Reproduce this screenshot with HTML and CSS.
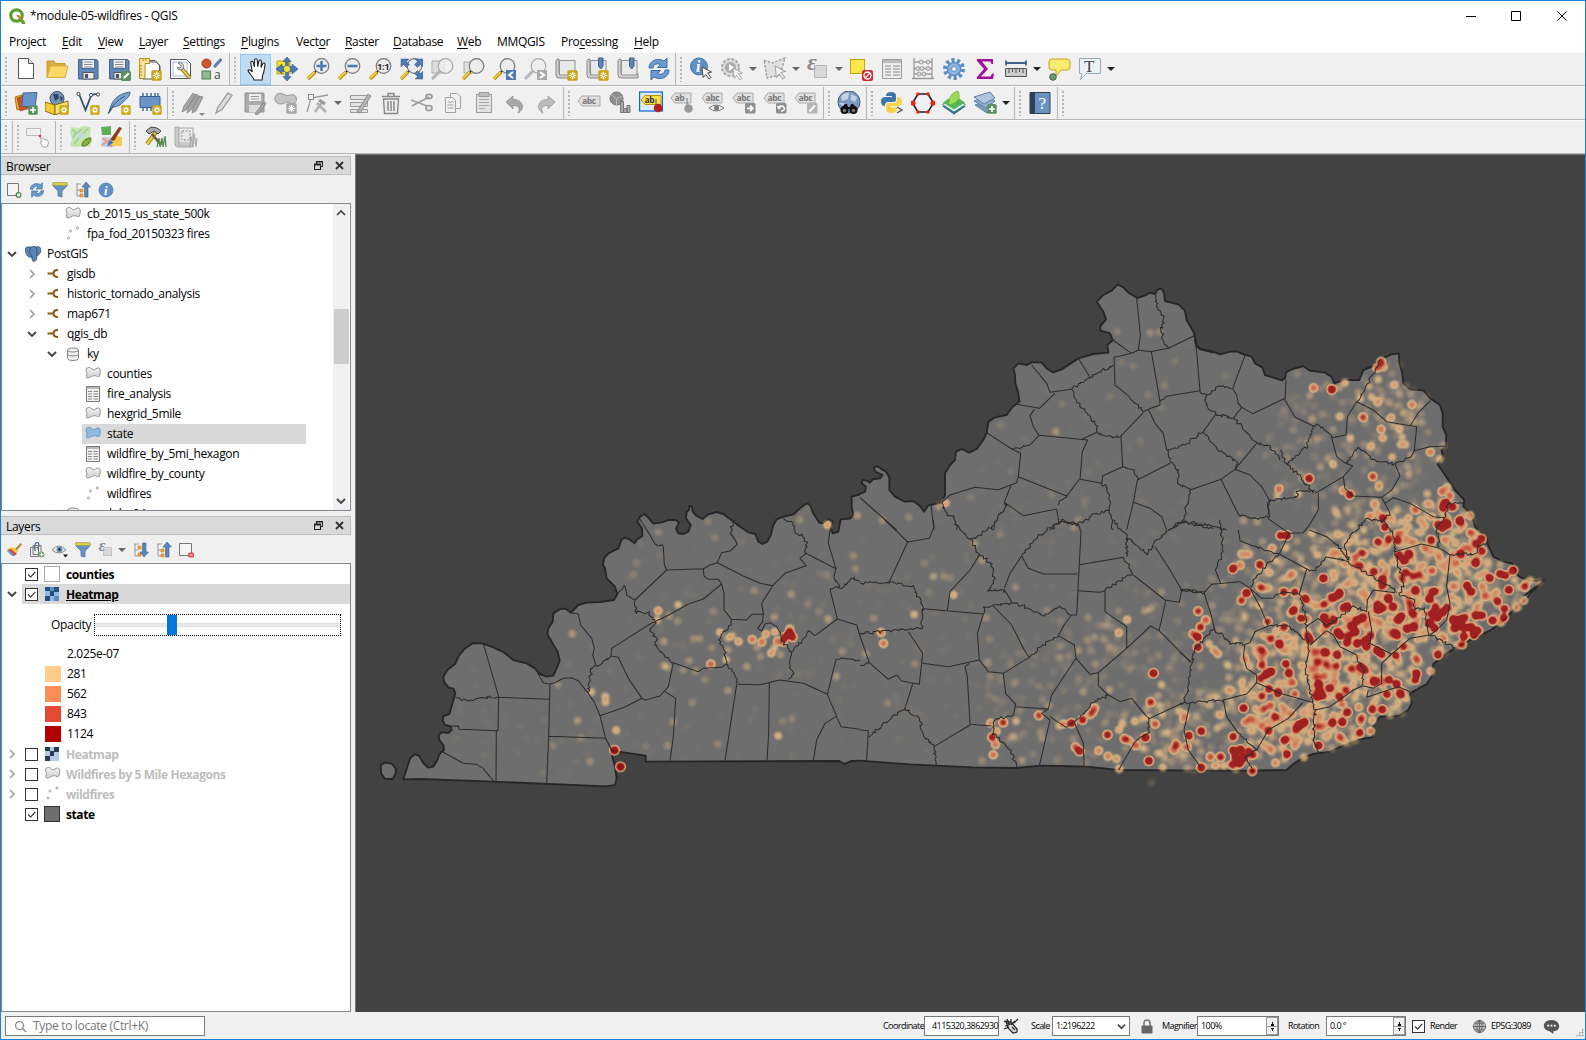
FILE: index.html
```html
<!DOCTYPE html>
<html lang="en">
<head>
<meta charset="utf-8">
<title>*module-05-wildfires - QGIS</title>
<link rel="stylesheet" href="styles.css">
</head>
<body>
<svg class="defs" aria-hidden="true">
<defs>
<linearGradient id="gGray" x1="0" y1="0" x2="0" y2="1"><stop offset="0" stop-color="#f2f2f2"/><stop offset="1" stop-color="#cfcfcf"/></linearGradient>
</defs>
<symbol id="star" viewBox="0 0 10 10"><rect x=".3" y=".3" width="9.4" height="9.4" rx="1.3" fill="#c9a40a"/><path d="M5 1.5v7M1.5 5h7M2.6 2.6l4.8 4.8M7.4 2.6L2.6 7.4" stroke="#fff" stroke-width="1.1"/><circle cx="5" cy="5" r="1" fill="#c9a40a"/></symbol>
<symbol id="starg" viewBox="0 0 10 10"><rect x=".3" y=".3" width="9.4" height="9.4" rx="1.3" fill="#a5a5a5"/><path d="M5 1.5v7M1.5 5h7M2.6 2.6l4.8 4.8M7.4 2.6L2.6 7.4" stroke="#fff" stroke-width="1.1"/></symbol>
<symbol id="plus" viewBox="0 0 10 10"><rect x=".3" y=".3" width="9.4" height="9.4" rx="1.3" fill="#5a8f60"/><path d="M5 2v6M2 5h6" stroke="#fff" stroke-width="1.6"/></symbol>
<symbol id="cursor" viewBox="0 0 12 14"><path d="M1 1l9.500 5-4 1 3.500 4.500-2 1.500-3.300-4.500-2.500 3z" fill="#fff" stroke="#444"/></symbol>
<symbol id="cursorg" viewBox="0 0 12 14"><path d="M1 1l9.500 5-4 1 3.500 4.500-2 1.500-3.300-4.500-2.500 3z" fill="#f4f4f4" stroke="#aaa"/></symbol>
<symbol id="lens" viewBox="0 0 24 24"><path d="M2 22l7-7" stroke="#b98a12" stroke-width="3.600"/><path d="M2 21.500l6.500-6.500" stroke="#f0cf3c" stroke-width="1.800"/><path d="M9 15l2-2" stroke="#222" stroke-width="2"/><circle cx="15.500" cy="9" r="7.300" fill="#ececec" stroke="#777" stroke-width="1.200"/></symbol>
<symbol id="lensg" viewBox="0 0 24 24"><path d="M2 22l8-8" stroke="#b5b5b5" stroke-width="3"/><circle cx="15.500" cy="9" r="7.300" fill="#efefef" fill-opacity=".8" stroke="#a8a8a8" stroke-width="1.200"/></symbol>
<symbol id="pagefold" viewBox="0 0 24 24"><path d="M4.500 1.500h10l5 5v15h-15z" fill="#fff" stroke="#555"/><path d="M14.500 1.500v5h5" fill="#ddd" stroke="#555"/></symbol>
<symbol id="folder" viewBox="0 0 24 24"><path d="M2 20V4h7l1.500 2.500H20V9" fill="#d9ac3d" stroke="#c79b2f"/><path d="M2 20.500L5.500 9H23l-3 11.500z" fill="#fbd867" stroke="#d9ac3d"/></symbol>
<symbol id="save" viewBox="0 0 24 24"><path d="M2.500 2.500h18l1.500 1.500v18H2.500z" fill="#5f88ba" stroke="#3f5f86"/><path d="M6 2.500h12.500v9H6z" fill="#f3f3f3" stroke="#48688f"/><path d="M8 5h8.500M8 7.500h8.500M8 10h8.500" stroke="#888"/><path d="M7 15.500h11v6.500H7z" fill="#eaeaea" stroke="#555"/><path d="M9 17h3v4H9z" fill="#456"/></symbol>
<symbol id="saveas" viewBox="0 0 24 24"><use href="#save" width="24" height="24"/><rect x="14" y="14" width="10" height="10" rx="1.500" fill="#5a8f60"/><path d="M16 22l1-2.500 4-4 1.500 1.500-4 4z" fill="#fff"/></symbol>
<symbol id="layout" viewBox="0 0 24 24"><path d="M5 5h13l4 4v13H5z" fill="#fff" stroke="#555"/><path d="M1.500 1.500h10v5H7v15H1.500z" fill="#f9e29b" stroke="#b98f16"/><path d="M5 2v2M8 2v2M2 9h2M2 12h2M2 15h2M2 18h2" stroke="#b98f16"/><path d="M11.500 3.500H17l4.500 4.500v6" fill="none" stroke="#555"/><use href="#star" x="13" y="13" width="11" height="11"/></symbol>
<symbol id="mgr" viewBox="0 0 24 24"><path d="M1.500 2.500h16l4 4v15h-20z" fill="#fff" stroke="#555"/><path d="M4 5h14v14H4z" fill="none" stroke="#9fbbe2"/><path d="M13 12l8 9" stroke="#8a6b10" stroke-width="4"/><path d="M13.500 12.500l7.500 8.500" stroke="#e6c95b" stroke-width="2.200"/><path d="M9 6a4 4 0 0 1 4.500 6.500A4 4 0 0 1 8 10l3 1 1.500-2z" fill="#ddd" stroke="#777"/></symbol>
<symbol id="style" viewBox="0 0 24 24"><circle cx="6.500" cy="6.500" r="4.500" fill="#d3532b" stroke="#a33c1b"/><path d="M15 9l5.500-6" stroke="#5a82b5" stroke-width="3.200" stroke-linecap="round"/><rect x="2" y="14" width="8.500" height="8" fill="#8fb98e" stroke="#4f7f50"/><text x="14" y="22" class="ic" font-size="12" fill="#444">a</text></symbol>
<symbol id="hand" viewBox="0 0 24 24"><path d="M10 23c-.5-3.500-5-6-6-9.500 1.300-1.500 3-.2 4.300 1.500L6.800 6c-.2-2 2.100-2.300 2.600-.4l1 4.400.2-6.800c.1-2 2.500-2 2.700 0l.4 6.500 1.200-5.500c.5-1.800 2.600-1.400 2.500.4l-.4 6 1.700-3.800c.7-1.500 2.600-.8 2.300 1-.8 3.700-.5 7.200-2.500 10.700l-.3 4.500z" fill="#fff" stroke="#222" stroke-width="1.100"/></symbol>
<symbol id="pansel" viewBox="0 0 24 24"><path d="M2 4h13v13H2z" fill="#f7e52c" stroke="#c2a30e"/><path d="M12 0l4 4.500h-2.600v5.100H17V7l6 5-6 5v-2.600h-3.600v5.100H16L12 24l-4-4.500h2.600v-5.100H7V17l-6-5 6-5v2.600h3.600V4.500H8z" fill="#4d79b0" stroke="#2f5687" stroke-width=".6"/><circle cx="12" cy="12" r="3" fill="#f7e52c"/></symbol>
<symbol id="zin" viewBox="0 0 24 24"><use href="#lens" width="24" height="24"/><path d="M15.500 4v10M10.500 9h10" stroke="#4d79b0" stroke-width="2.600"/></symbol>
<symbol id="zout" viewBox="0 0 24 24"><use href="#lens" width="24" height="24"/><path d="M10.500 9h10" stroke="#4d79b0" stroke-width="2.600"/></symbol>
<symbol id="z11" viewBox="0 0 24 24"><use href="#lens" width="24" height="24"/><text x="9" y="12.500" class="ic" font-size="9.500" font-weight="700" fill="#333">1:1</text></symbol>
<symbol id="zfull" viewBox="0 0 24 24"><use href="#lens" width="24" height="24"/><path d="M2 2h8L7.500 4.500l3 3-3 3-3-3L2 10zM24 2v8l-2.500-2.500-3 3-3-3 3-3L16 2zM24 22h-8l2.500-2.500-3-3 3-3 3 3L24 14z" fill="#4d79b0" stroke="#365f92" stroke-width=".5"/></symbol>
<symbol id="zsel" viewBox="0 0 24 24"><path d="M2 4h12v12H2z" fill="#ddd" stroke="#aaa"/><use href="#lensg" width="24" height="24"/></symbol>
<symbol id="zlay" viewBox="0 0 24 24"><path d="M3 5h12v11H3z" fill="#e2e2e2" stroke="#aaa"/><use href="#lens" width="24" height="24"/></symbol>
<symbol id="zlast" viewBox="0 0 24 24"><use href="#lens" width="24" height="24"/><path d="M14 13h10v10H14z" fill="#4d79b0"/><path d="M21 15l-4 3 4 3" stroke="#fff" stroke-width="2" fill="none"/></symbol>
<symbol id="znext" viewBox="0 0 24 24"><use href="#lensg" width="24" height="24"/><path d="M14 13h10v10H14z" fill="#aaa"/><path d="M17 15l4 3-4 3" stroke="#fff" stroke-width="2" fill="none"/></symbol>
<symbol id="scroll" viewBox="0 0 24 24"><path d="M2 4q0-2 3-2v14.500h17v4.500H5A3 3 0 0 1 2 18z" fill="#d2d2d2" stroke="#888"/><path d="M5.500 3.500h15.500v14.500H5.500z" fill="#e9e9e9" stroke="#909090"/></symbol>
<symbol id="mapnew" viewBox="0 0 24 24"><use href="#scroll" width="24" height="24"/><use href="#star" x="13" y="13" width="11" height="11"/></symbol>
<symbol id="bmnew" viewBox="0 0 24 24"><use href="#mapnew" width="24" height="24"/><path d="M13.500 1h4.500v8l-2.250 3L13.500 9z" fill="#5b86ba" stroke="#365f92"/></symbol>
<symbol id="bm" viewBox="0 0 24 24"><use href="#scroll" width="24" height="24"/><path d="M13.500 1h4.500v8l-2.250 3L13.500 9z" fill="#5b86ba" stroke="#365f92"/></symbol>
<symbol id="refresh" viewBox="0 0 24 24"><path d="M2 11C2 4 10 0 17 4l3-3v9.500h-9.500l3-3C10 6 7 7 6 11z" fill="#6a9ad0" stroke="#3f6ea6"/><path d="M22 13c0 7-8 11-15 7l-3 3v-9.500h9.500l-3 3C14 18 17 17 18 13z" fill="#6a9ad0" stroke="#3f6ea6"/></symbol>
<symbol id="info" viewBox="0 0 24 24"><circle cx="12" cy="12" r="10.500" fill="#6090c4" stroke="#4676ac"/><text x="9" y="19" class="is" font-size="19" fill="#fff">i</text></symbol>
<symbol id="ident" viewBox="0 0 24 24"><circle cx="10" cy="9.500" r="8.500" fill="#6090c4" stroke="#4676ac"/><text x="7" y="15" class="is" font-size="16" fill="#fff">i</text><use href="#cursor" x="12" y="9" width="12" height="14"/></symbol>
<symbol id="rung" viewBox="0 0 24 24"><circle cx="10.500" cy="10.500" r="8.500" fill="#ddd" stroke="#a9a9a9" stroke-width="2" stroke-dasharray="3 1.500"/><circle cx="10.500" cy="10.500" r="5.500" fill="#aaa"/><path d="M9 7l5 3.500-5 3.500z" fill="#fff"/><use href="#cursorg" x="12" y="10" width="12" height="14"/></symbol>
<symbol id="selg" viewBox="0 0 24 24"><path d="M1 3l8 3L22 1l-5 17-13 3z" fill="#e0e0e0" stroke="#999" stroke-dasharray="2.500 1.500" stroke-width="1.300"/><use href="#cursorg" x="11" y="8" width="13" height="15"/></symbol>
<symbol id="epsg" viewBox="0 0 24 24"><rect x="8.500" y="8.500" width="12" height="12" fill="#d9d9d9" stroke="#b5b5b5"/><text x="1" y="13" class="is" font-size="24" fill="#8d8d8d">ε</text></symbol>
<symbol id="desel" viewBox="0 0 24 24"><rect x="1.500" y="2.500" width="14" height="14" fill="#fde64b" stroke="#c2a30e"/><rect x="13" y="13" width="11" height="11" rx="2" fill="#d2282e"/><circle cx="18.500" cy="18.500" r="3.500" fill="none" stroke="#fff" stroke-width="1.300"/><path d="M16 21l5-5" stroke="#fff" stroke-width="1.300"/></symbol>
<symbol id="table" viewBox="0 0 24 24"><path d="M2.500 2.500h19v19h-19z" fill="#eee" stroke="#999"/><path d="M3 3h18v3H3z" fill="#bbb"/><path d="M5 9h6M13 9h7M5 12h6M13 12h7M5 15h6M13 15h7M5 18h6M13 18h7" stroke="#aaa" stroke-width="1.400"/></symbol>
<symbol id="abacus" viewBox="0 0 24 24"><path d="M3 1v20M21 1v20M1 21.500h22M3 5h18M3 11.500h18M3 17h18" stroke="#999" stroke-width="1.300"/><g fill="#ddd" stroke="#999"><circle cx="10" cy="5" r="2"/><circle cx="17" cy="5" r="2"/><circle cx="7" cy="11.500" r="2"/><circle cx="11" cy="11.500" r="2"/><circle cx="17" cy="11.500" r="2"/><circle cx="8" cy="17" r="2"/><circle cx="13" cy="17" r="2"/></g></symbol>
<symbol id="gear" viewBox="0 0 24 24"><circle cx="12" cy="12" r="9" fill="none" stroke="#5b8cc8" stroke-width="4" stroke-dasharray="3.200 2.450"/><circle cx="12" cy="12" r="6.500" fill="#8db3e2" stroke="#5b8cc8" stroke-width="1.500"/><circle cx="12" cy="12" r="2.500" fill="#f0f0f0" stroke="#5b8cc8"/></symbol>
<symbol id="sigma" viewBox="0 0 24 24"><path d="M4 2h16v5h-1.500l-1-2.500H9L15 12l-7 7.500h9.500l1.500-3H21L20 22H4v-2l7-8L4 4z" fill="#a30e9c"/></symbol>
<symbol id="measure" viewBox="0 0 24 24"><path d="M2 6h20M2 3.500v5M22 3.500v5" stroke="#3f5f86" stroke-width="1.800"/><path d="M1.500 11.500h21v8h-21z" fill="#ccc" stroke="#555"/><path d="M5 12v4M8.500 12v3M12 12v4M15.500 12v3M19 12v4" stroke="#555"/></symbol>
<symbol id="tip" viewBox="0 0 24 24"><path d="M5 2h15q3 0 3 3v5q0 3-3 3h-6l-5 6 0-6H5q-3 0-3-3V5q0-3 3-3z" fill="#f7ea72" stroke="#c9a413"/><circle cx="6" cy="20" r="3.300" fill="#6b9a70" stroke="#41684a"/></symbol>
<symbol id="txt" viewBox="0 0 24 24"><path d="M1.500 1.500h21v15h-14l-6 6 1.500-6h-2.500z" fill="#eaf2f6" stroke="#9ab"/><text x="6" y="15" class="is2" font-size="17" fill="#444">T</text></symbol>
<symbol id="dsm" viewBox="0 0 24 24"><path d="M1 6l10-3 3 12-11 4z" fill="#f0b92c" stroke="#a87411"/><path d="M3 7l11-4 3 14-11 3z" fill="#c5512f" stroke="#93371c" stroke-width=".6"/><path d="M9 2l14-.5-2 14-13 0z" fill="#6a94c8" stroke="#3f6694"/><use href="#plus" x="14" y="14" width="10" height="10"/></symbol>
<symbol id="gpkg" viewBox="0 0 24 24"><circle cx="12" cy="7.500" r="7" fill="#7394b8" stroke="#35506e"/><path d="M8 3l5 0 1 4-4 3zM15 5l3 2-2 4z" fill="#2d4663"/><path d="M0 11l10 3v10L0 20z" fill="#f3ce2e" stroke="#8b6c0a"/><path d="M10 14l13-4v9l-13 5z" fill="#fbe572" stroke="#8b6c0a"/><use href="#star" x="14" y="14" width="10" height="10"/></symbol>
<symbol id="vnew" viewBox="0 0 24 24"><path d="M3 3l6.500 16L15 5q3-3 7-1" fill="none" stroke="#33506f" stroke-width="1.800"/><g fill="#fff" stroke="#445"><circle cx="2.500" cy="3" r="1.600"/><circle cx="15" cy="4" r="1.600"/><circle cx="22" cy="3.500" r="1.600"/></g><use href="#star" x="14" y="14" width="10" height="10"/></symbol>
<symbol id="feather" viewBox="0 0 24 24"><path d="M2 22C4 10 10 3 23 1c0 5-4 7-6 9-3 4-8 6-11 6z" fill="#7fa5d3" stroke="#3a6190"/><path d="M1 23C5 15 10 9 18 5" stroke="#2d4f77" fill="none"/><use href="#star" x="14" y="14" width="10" height="10"/></symbol>
<symbol id="chip" viewBox="0 0 24 24"><path d="M5 2v18M9 2v18M13 2v18M17 2v18M20 2v18" stroke="#355f92" stroke-width="1.400"/><path d="M2 5.500h20v11H2z" fill="#6a94c8" stroke="#355f92"/><use href="#star" x="14" y="14" width="10" height="10"/></symbol>
<symbol id="pens" viewBox="0 0 24 24"><path d="M1 21l2-6L12 2l3 2L5 19zM6 22l1-5L15 3l3 2L10 19zM11 22l1-5L18 5l4 1L15 20z" fill="#a5a5a5" stroke="#858585" stroke-width=".8"/></symbol>
<symbol id="pen" viewBox="0 0 24 24"><path d="M4 22l2-6L16 2l4 2.500-10 14z" fill="#ddd" stroke="#9e9e9e" stroke-width="1.300"/></symbol>
<symbol id="saveg" viewBox="0 0 24 24"><path d="M2 2h19v19H2z" fill="#ababab" stroke="#929292"/><path d="M6 3h12v7H6z" fill="#eee"/><path d="M8 5.500h8M8 8h8" stroke="#999"/><path d="M6 14h11v7H6z" fill="#ddd"/><path d="M12 23l9-12 2 1.500-8 11z" fill="#aaa" stroke="#888"/></symbol>
<symbol id="polyg" viewBox="0 0 24 24"><path d="M1 6c2-5 7-4 10-2s9-3 11 2-2 8-6 6-5 1-9 1-7-3-6-7z" fill="#c4c4c4" stroke="#999"/><use href="#starg" x="12" y="12" width="11" height="11"/></symbol>
<symbol id="vertg" viewBox="0 0 24 24"><path d="M2 21L6 7l17-3" fill="none" stroke="#999" stroke-width="1.300"/><rect x="3.500" y="3.500" width="5" height="5" fill="#eee" stroke="#888"/><path d="M12 12l9 9M18 10L10 21" stroke="#b3b3b3" stroke-width="2.600"/><path d="M14 9l6 4" stroke="#999" stroke-width="3"/></symbol>
<symbol id="editg" viewBox="0 0 24 24"><path d="M2.500 4.500h17v4h-17zM2.500 11.500h17v4h-17zM2.500 18.500h17v3h-17z" fill="#e4e4e4" stroke="#999"/><path d="M9 21L20 3l3 2-11 17z" fill="#b5b5b5" stroke="#8d8d8d"/></symbol>
<symbol id="trash" viewBox="0 0 24 24"><path d="M4.500 8h15l-1 14.500h-13z" fill="#eee" stroke="#888" stroke-width="1.400"/><path d="M3 5.500h18M9 5V2.500h6V5M9 10v10M12 10v10M15 10v10" stroke="#888" stroke-width="1.500" fill="none"/></symbol>
<symbol id="cut" viewBox="0 0 24 24"><path d="M1 9l16 6M2 15l17-9" stroke="#a0a0a0" stroke-width="1.800"/><g fill="none" stroke="#999" stroke-width="1.700"><ellipse cx="19" cy="5.500" rx="3" ry="2.200"/><ellipse cx="19" cy="17" rx="3" ry="2.500"/></g></symbol>
<symbol id="copy" viewBox="0 0 24 24"><g fill="#f1f1f1" stroke="#a0a0a0"><path d="M9.500 2.500h7l3 3v12h-10z"/><path d="M4.500 6.500h7l3 3v12h-10z"/></g><path d="M6.500 11h6M6.500 14h6M6.500 17h6" stroke="#a0a0a0"/></symbol>
<symbol id="paste" viewBox="0 0 24 24"><path d="M4.500 3.500h15v18h-15z" fill="#e2e2e2" stroke="#999"/><path d="M7 1.500h10v4H7z" fill="#bdbdbd" stroke="#999"/><path d="M7 8.500h10M7 11.500h10M7 14.500h10M7 17.500h6" stroke="#a8a8a8"/></symbol>
<symbol id="undo" viewBox="0 0 24 24"><path d="M3 11l7-6v3.500c11 0 12 10 5 13.500 3-5 0-7.500-5-7.500V18z" fill="#a8a8a8" stroke="#999"/></symbol>
<symbol id="redo" viewBox="0 0 24 24"><path d="M21 11l-7-6v3.500C3 8.500 2 18.500 9 22c-3-5 0-7.500 5-7.500V18z" fill="#bcbcbc" stroke="#a5a5a5"/></symbol>
<symbol id="abc" viewBox="0 0 24 24"><path d="M1 10l4-5h18v10H5z" fill="#e1e1e1" stroke="#aaa"/><text x="5" y="13" class="ic" font-size="8.500" font-weight="700" fill="#777">abc</text></symbol>
<symbol id="abc2" viewBox="0 0 24 24"><path d="M1 7l4-5h16v10H5z" fill="#e1e1e1" stroke="#aaa"/><text x="4.500" y="10" class="ic" font-size="8.500" font-weight="700" fill="#777">abc</text></symbol>
<symbol id="abcpin" viewBox="0 0 24 24"><path d="M1 7l4-5h16v10H5z" fill="#e1e1e1" stroke="#aaa"/><text x="4.500" y="10" class="ic" font-size="8.500" font-weight="700" fill="#777">ab</text><path d="M17 7v9" stroke="#777"/><circle cx="18.500" cy="17.500" r="4.300" fill="#999"/></symbol>
<symbol id="abcsel" viewBox="0 0 24 24"><rect x=".6" y="1" width="22.800" height="19" fill="#dceafb" stroke="#0a64d8" stroke-width="1.200"/><path d="M2 9l4-4.500h16v9H6z" fill="#fbe24a" stroke="#b4950c"/><text x="5.500" y="12" class="ic" font-size="8.500" font-weight="700" fill="#333">ab</text><path d="M17 8v8" stroke="#555"/><circle cx="19" cy="17" r="4.300" fill="#b3201f"/></symbol>
<symbol id="abceye" viewBox="0 0 24 24"><use href="#abc2" width="24" height="24"/><path d="M8 17q7-6 15 0q-8 6-15 0z" fill="#eee" stroke="#777"/><circle cx="15.500" cy="17" r="2.500" fill="#777"/></symbol>
<symbol id="abcmov" viewBox="0 0 24 24"><use href="#abc2" width="24" height="24"/><rect x="13" y="12" width="10.500" height="10.500" rx="1.500" fill="#8f8f8f"/><path d="M15 17.300h5M18 14.500l3 2.800-3 2.800" stroke="#fff" stroke-width="1.700" fill="none"/></symbol>
<symbol id="abcrot" viewBox="0 0 24 24"><use href="#abc2" width="24" height="24"/><rect x="13" y="12" width="10.500" height="10.500" rx="1.500" fill="#8f8f8f"/><path d="M16 16a3 2.500 0 1 1 2 4M14.500 15l1.500 2.500 2-2" stroke="#fff" stroke-width="1.500" fill="none"/></symbol>
<symbol id="abced" viewBox="0 0 24 24"><use href="#abc2" width="24" height="24"/><rect x="13" y="12" width="10.500" height="10.500" rx="1.500" fill="#b5b5b5"/><path d="M15.500 20.500l5.500-6" stroke="#fff" stroke-width="2"/></symbol>
<symbol id="diag" viewBox="0 0 24 24"><circle cx="8.500" cy="7.500" r="6.500" fill="#8f8f8f" stroke="#777"/><path d="M8.500 7.500L3 3.500M8.500 7.500l6-2.500M8.500 7.500V14" stroke="#bbb"/><path d="M12.500 10.500h3v11h-3zM15.500 17.500h3.500v4h-3.500zM19 14.500h3v7h-3z" fill="#aaa" stroke="#777"/></symbol>
<symbol id="metas" viewBox="0 0 24 24"><circle cx="12" cy="11" r="11" fill="#7f9cc0" stroke="#3f5878"/><path d="M4 5q4-4 8-3l-1 6-6 2zM14 3l6 3-2 5-4-2zM2 12l5 0 0 4z" fill="#c3d3e6"/><path d="M5 16l3-3h2l1 3h2l1-3h2l3 3v2H5z" fill="#111"/><circle cx="7.500" cy="19" r="4" fill="#111"/><circle cx="16.500" cy="19" r="4" fill="#111"/><circle cx="7.500" cy="19.500" r="1.700" fill="#777"/><circle cx="16.500" cy="19.500" r="1.700" fill="#777"/></symbol>
<symbol id="python" viewBox="0 0 24 24"><path d="M6 5q0-4 5-4t5 3.500v4q0 2.500-3 2.500H8q-3 0-3 4Q1 15 1 10.500T5 6h7V5z" fill="#3b76a8"/><path d="M17 6q5 0 5 4.500T18 15h-7v1.500h6V18q0 4-5.500 4T6 18.500V15q0-3 3-3h5q3 0 3-3z" fill="#fbd34a"/><path d="M17 16l5 3-5 3" stroke="#555" stroke-width="1.400" fill="none"/></symbol>
<symbol id="hex" viewBox="0 0 24 24"><path d="M7 3h10l5.500 9-5.500 9H7l-5.500-9z" fill="none" stroke="#222" stroke-width="1.600"/><g fill="#e21"><circle cx="7" cy="3" r="1.700"/><circle cx="17" cy="3" r="1.700"/><circle cx="22" cy="12" r="2.600"/><circle cx="17" cy="21" r="1.700"/><circle cx="7" cy="21" r="1.700"/><circle cx="2" cy="12" r="2.600"/></g></symbol>
<symbol id="leaf" viewBox="0 0 24 24"><path d="M12 8l11.500 7.500L12 23.500.5 15.500z" fill="#2e6c86"/><path d="M12 6l11.500 7.500L12 21 .5 13.500z" fill="#e8f4f0" stroke="#2f8a83"/><path d="M12 4l11 7.500L12 18.500 1 11.500z" fill="#56b558"/><path d="M7 14C6 7 10 1 16 0c3 6 1 12-9 14z" fill="#9ddb57" stroke="#5da62f" stroke-width=".6"/></symbol>
<symbol id="layers" viewBox="0 0 24 24"><path d="M2 14l11-3 9 3-8 8z" fill="#7f99b8" stroke="#5d7fa6"/><path d="M1 10l12-4 9 4-9 7z" fill="#93aecd" stroke="#5d7fa6"/><path d="M1 6L17 1l5 6-11 6z" fill="#aec5de" stroke="#5d7fa6"/><use href="#plus" x="14" y="13" width="10" height="10"/></symbol>
<symbol id="help" viewBox="0 0 24 24"><path d="M2 1.500h20v21H2z" fill="#6a93c4" stroke="#2d3e50"/><path d="M2 1.500h5v21H2z" fill="#2d4054"/><text x="10.500" y="17.500" class="is2" font-size="17" fill="#fff">?</text></symbol>
<symbol id="rectp" viewBox="0 0 24 24"><path d="M.5 3.500h14v7h-14z" fill="none" stroke="#bbb"/><circle cx="14" cy="11" r="1.300" fill="#d33"/><path d="M14 12l2 5-2 0 3 5h4l1.500-4-1-3-4.500-1z" fill="#fff" stroke="#aaa"/></symbol>
<symbol id="osm" viewBox="0 0 24 24"><path d="M2 2l7 1 6-2 7 1-1 7 2 7-2 6-7-1-6 1-7-1 2-7-2-6z" fill="#c3e4b0"/><path d="M10 8h4l0 5-4 1z" fill="#b8d9e8"/><path d="M3 4l4 4-3 5M5 19l5-6M14 8l5-4M8 8l5-4" stroke="#9fce96" fill="none" stroke-width="1.500"/><path d="M13 21c0-5 4-8 9-8-1 5-4 9-9 8z" fill="#8cae3f" stroke="#50701a"/></symbol>
<symbol id="osm2" viewBox="0 0 24 24"><path d="M1 2l10-1v9H2z" fill="#5fae5c"/><path d="M2 12h12v10H1z" fill="#c8d4e8"/><path d="M13 10l9 2v9H10z" fill="#f4cc4f"/><path d="M2 20l8-5M3 13l9 9" stroke="#e59c90" stroke-width="2"/><path d="M10 15L19 2l3 1-8 13z" fill="#8a3f1a"/><path d="M7 22l2.500-7 4 2.500z" fill="#3674c4"/></symbol>
<symbol id="hammer" viewBox="0 0 24 24"><path d="M4 19l9-12" stroke="#8a7a18" stroke-width="4"/><path d="M4 19l9-12" stroke="#e3cf3c" stroke-width="2.400"/><path d="M3 6l5-4 6 1 4 3-3 3-4-3-5 3z" fill="#aaa" stroke="#444"/><path d="M9 9l9 11" stroke="#6e5a3a" stroke-width="2.500"/><path d="M14 22l2-9 1 9 2-9 1 9 2-11 1 11" stroke="#4f8a4b" stroke-width="1.300" fill="none"/></symbol>
<symbol id="scrollg" viewBox="0 0 24 24"><path d="M1 2h4v18h14v2H4q-3 0-3-3z" fill="#ccc" stroke="#aaa"/><path d="M5 3h14v15H5z" fill="#e8e8e8" stroke="#aaa"/><path d="M8 6h8v9H8z" fill="none" stroke="#888" stroke-dasharray="2 1.500"/><path d="M16 22l1-11 2 11 1-14 2 14 1-9" stroke="#aaa" stroke-width="1.200" fill="none"/></symbol>
<symbol id="poly" viewBox="0 0 16 16"><path d="M1 4q0-2.500 3-2.500 2 0 3 1.500 1.500 1.500 3.500 0T14 2q2 1 1 6-.3 3.500-2.500 2.500-2-1.500-5-.5-4 2.500-5.500 2-1.500-1 0-4.500z" fill="url(#gGray)" stroke="#999"/></symbol>
<symbol id="polyb" viewBox="0 0 16 16"><path d="M1 4q0-2.500 3-2.500 2 0 3 1.500 1.500 1.500 3.500 0T14 2q2 1 1 6-.3 3.500-2.500 2.500-2-1.500-5-.5-4 2.500-5.500 2-1.500-1 0-4.500z" fill="#8fbbe2" stroke="#6d9cc8"/></symbol>
<symbol id="pts" viewBox="0 0 16 16"><g fill="#eee" stroke="#999" stroke-width=".8"><circle cx="12.500" cy="2" r="1.100"/><circle cx="5.500" cy="5" r="1.100"/><circle cx="3.500" cy="12" r="1.100"/></g></symbol>
<symbol id="tbl" viewBox="0 0 16 16"><path d="M1.500.5h13v15h-13z" fill="#f2f2f2" stroke="#777"/><path d="M2 1h12v2H2z" fill="#bbb"/><path d="M3 5.500h4M8.500 5.500H13M3 8h4M8.500 8H13M3 10.500h4M8.500 10.500H13M3 13h4M8.500 13H13" stroke="#888"/></symbol>
<symbol id="pg" viewBox="0 0 16 16"><path d="M0 3q1-3 5-2l2 0q2-1.300 4 0 5-1 5 3-.5 4-3 5-1.500.5-1.500 4.500-2 3.500-4.500.5L7 11q-3 1-4.500-1T0 3z" fill="#5d86b8" stroke="#34587f" stroke-width=".9"/><path d="M5 1.500Q3.500 7 7 11M11 1.500q2 4 .5 8" stroke="#34587f" fill="none"/></symbol>
<symbol id="conn" viewBox="0 0 16 16"><path d="M2.500 7.500h6M13 4h-1Q8.500 4.200 8.500 7.500T12 11h1" stroke="#8a5a10" stroke-width="1.900" fill="none"/></symbol>
<symbol id="db" viewBox="0 0 16 16"><path d="M2.500 4v8.500q0 2 5.500 2t5.500-2V4" fill="#f0f0f0" stroke="#888"/><ellipse cx="8" cy="4" rx="5.500" ry="2" fill="#f0f0f0" stroke="#888"/><path d="M2.500 8q0 2 5.500 2t5.500-2" fill="none" stroke="#888"/></symbol>
<symbol id="raster" viewBox="0 0 14 14"><path d="M0 0h14v14H0z" fill="#8fbbe8"/><path d="M0 0h5v4H0zM9 0h5v5H9zM5 4h4v5H5zM0 9h5v5H0z" fill="#24507f"/><path d="M5 0h4v4H5zM9 9h5v5H9z" fill="#5b8cc0"/></symbol>
<symbol id="rasterg" viewBox="0 0 14 14"><path d="M0 0h14v14H0z" fill="#b4c9e2"/><path d="M0 0h5v4H0zM9 0h5v5H9zM5 4h4v5H5zM0 9h5v5H0z" fill="#2a3950"/></symbol>
<symbol id="sadd" viewBox="0 0 16 16"><path d="M1.500 1.500h11v12h-11z" fill="#f5f5f5" stroke="#777"/><circle cx="12.500" cy="13" r="2.300" fill="#fff" stroke="#3f8a4b" stroke-width="1.300"/></symbol>
<symbol id="srem" viewBox="0 0 16 16"><path d="M.5 1.500h12v12h-12z" fill="#f5f5f5" stroke="#777"/><rect x="9" y="10.500" width="6" height="5" rx="1.500" fill="#e3494e"/><path d="M10.500 13h3" stroke="#fff"/></symbol>
<symbol id="funnel" viewBox="0 0 16 16"><path d="M1 1h14v3l-5 5v6l-4-1V9L1 4z" fill="#6693c6" stroke="#46719f" stroke-width=".7"/><path d="M1 .8h14v2.500H1z" fill="#ecd944" stroke="#a9991e" stroke-width=".6"/></symbol>
<symbol id="collapse" viewBox="0 0 16 16"><path d="M1 2h5M2 2v12h4M2 8h3" stroke="#999" fill="none"/><path d="M5 7h3v3H5zM5 12h3v3H5z" fill="#f7a13c" stroke="#d47a14" stroke-width=".6"/><path d="M11 0l4.500 5H13v10H9.500V5H7z" fill="#5b86ba" stroke="#365f92" stroke-width=".6"/></symbol>
<symbol id="expand" viewBox="0 0 16 16"><path d="M1 2h5M2 2v12h4M2 8h3" stroke="#999" fill="none"/><path d="M5 4h3v3H5zM5 11h3v3H5z" fill="#f7a13c" stroke="#d47a14" stroke-width=".6"/><path d="M11 15l4.500-5H13V1H9.500v9H7z" fill="#5b86ba" stroke="#365f92" stroke-width=".6"/></symbol>
<symbol id="brush" viewBox="0 0 16 16"><path d="M8 8l6.500-7 1.500 1.500-6 7z" fill="#b98840"/><path d="M1 7l6-2 5 4-4 5z" fill="#f2c83c"/><path d="M1 8l4-1 6 5-3 2z" fill="#d4493b"/><path d="M1 9l2-1 6 6-3 0z" fill="#6a96d2"/></symbol>
<symbol id="addgrp" viewBox="0 0 16 16"><path d="M1.500 5.500h8v9h-8zM4 3.500h8v9H4z" fill="#eee" stroke="#777"/><path d="M6 9q-1-8 2-8.500T9 8" fill="none" stroke="#456a94" stroke-width="1.200"/><circle cx="12.500" cy="12.500" r="3" fill="#71a377"/><path d="M12.500 10.500v4M10.500 12.500h4" stroke="#fff"/></symbol>
<symbol id="eye" viewBox="0 0 16 16"><path d="M0 8q7-8 14 0-7 6-14 0z" fill="#eee" stroke="#888"/><circle cx="7.500" cy="7.500" r="3" fill="#6f93c0"/><circle cx="7.500" cy="7.500" r="1.200" fill="#123"/><path d="M11 12.500h5l-2.500 3z" fill="#111"/></symbol>
<symbol id="float" viewBox="0 0 9 9"><path d="M2.500 2.500v-2h6v5h-2M.5 3h6v5.500h-6zM.5 4h6M2.500 1h6" fill="none" stroke="#222" stroke-width="1.100"/></symbol>
<symbol id="x" viewBox="0 0 9 9"><path d="M1 1l7 7M8 1L1 8" stroke="#333" stroke-width="1.900"/></symbol>
<symbol id="dn" viewBox="0 0 10 10"><path d="M1 3l4 4 4-4" fill="none" stroke="#444" stroke-width="1.900"/></symbol>
<symbol id="up" viewBox="0 0 10 10"><path d="M1 7l4-4 4 4" fill="none" stroke="#444" stroke-width="1.700"/></symbol>
<symbol id="rt" viewBox="0 0 10 10"><path d="M3 1l4 4-4 4" fill="none" stroke="#a0a0a0" stroke-width="1.700"/></symbol>
</svg>

<div class="window">
  <header class="title">
    <svg class="logo" viewBox="0 0 16 16"><circle cx="7.500" cy="7.500" r="5.700" fill="none" stroke="#5b9e32" stroke-width="3.300"/><path d="M9 9h3l4 5v2h-3z" fill="#5b9e32"/><path d="M7 7h3l2.500 3v3z" fill="#e9762b"/></svg>
    <span>*module-05-wildfires - QGIS</span>
    <svg class="winbtns" viewBox="0 0 115 20" fill="none" stroke="#000"><path d="M5 10.500h10M50.500 5.500h9v9h-9zM96.500 5.500l9 9M105.500 5.500l-9 9"/></svg>
  </header>
  <nav class="menu"><span>Pro<u>j</u>ect</span><span><u>E</u>dit</span><span><u>V</u>iew</span><span><u>L</u>ayer</span><span><u>S</u>ettings</span><span><u>P</u>lugins</span><span>Vect<u>o</u>r</span><span><u>R</u>aster</span><span><u>D</u>atabase</span><span><u>W</u>eb</span><span>MMQGIS</span><span>Pro<u>c</u>essing</span><span><u>H</u>elp</span></nav>

  <div class="bar">
    <div class="grp w229"><i class="grip"></i><b><svg><use href="#pagefold"/></svg></b><b><svg><use href="#folder"/></svg></b><b><svg><use href="#save"/></svg></b><b><svg><use href="#saveas"/></svg></b><b><svg><use href="#layout"/></svg></b><b><svg><use href="#mgr"/></svg></b><b><svg><use href="#style"/></svg></b></div>
    <div class="grp w446"><i class="grip"></i><b class="on"><svg><use href="#hand"/></svg></b><b><svg><use href="#pansel"/></svg></b><b><svg><use href="#zin"/></svg></b><b><svg><use href="#zout"/></svg></b><b><svg><use href="#z11"/></svg></b><b><svg><use href="#zfull"/></svg></b><b><svg><use href="#zsel"/></svg></b><b><svg><use href="#zlay"/></svg></b><b><svg><use href="#zlast"/></svg></b><b><svg><use href="#znext"/></svg></b><b><svg><use href="#mapnew"/></svg></b><b><svg><use href="#bmnew"/></svg></b><b><svg><use href="#bm"/></svg></b><b><svg><use href="#refresh"/></svg></b></div>
    <div class="grp last"><i class="grip"></i><b><svg><use href="#ident"/></svg></b><b><svg><use href="#rung"/></svg></b><em class="dim"></em><b><svg><use href="#selg"/></svg></b><em class="dim"></em><b><svg><use href="#epsg"/></svg></b><em class="dim"></em><b><svg><use href="#desel"/></svg></b><b><svg><use href="#table"/></svg></b><b><svg><use href="#abacus"/></svg></b><b><svg><use href="#gear"/></svg></b><b><svg><use href="#sigma"/></svg></b><b><svg><use href="#measure"/></svg></b><em></em><b><svg><use href="#tip"/></svg></b><b><svg><use href="#txt"/></svg></b><em></em></div>
  </div>
  <div class="bar">
    <div class="grp w167"><i class="grip"></i><b><svg><use href="#dsm"/></svg></b><b><svg><use href="#gpkg"/></svg></b><b><svg><use href="#vnew"/></svg></b><b><svg><use href="#feather"/></svg></b><b><svg><use href="#chip"/></svg></b></div>
    <div class="grp w396"><i class="grip"></i><b class="corner"><svg><use href="#pens"/></svg></b><b><svg><use href="#pen"/></svg></b><b><svg><use href="#saveg"/></svg></b><b><svg><use href="#polyg"/></svg></b><b><svg><use href="#vertg"/></svg></b><em class="dim"></em><b><svg><use href="#editg"/></svg></b><b><svg><use href="#trash"/></svg></b><b><svg><use href="#cut"/></svg></b><b><svg><use href="#copy"/></svg></b><b><svg><use href="#paste"/></svg></b><b><svg><use href="#undo"/></svg></b><b><svg><use href="#redo"/></svg></b></div>
    <div class="grp w260"><i class="grip"></i><b><svg><use href="#abc"/></svg></b><b><svg><use href="#diag"/></svg></b><b><svg><use href="#abcsel"/></svg></b><b><svg><use href="#abcpin"/></svg></b><b><svg><use href="#abceye"/></svg></b><b><svg><use href="#abcmov"/></svg></b><b><svg><use href="#abcrot"/></svg></b><b><svg><use href="#abced"/></svg></b></div>
    <div class="grp w43"><i class="grip"></i><b><svg><use href="#metas"/></svg></b></div>
    <div class="grp w148"><i class="grip"></i><b><svg><use href="#python"/></svg></b><b><svg><use href="#hex"/></svg></b><b><svg><use href="#leaf"/></svg></b><b><svg><use href="#layers"/></svg></b><em></em></div>
    <div class="grp w43"><i class="grip"></i><b><svg><use href="#help"/></svg></b></div>
    <div class="grp last"><i class="grip"></i></div>
  </div>
  <div class="bar third">
    <div class="grp w12"><i class="grip"></i></div>
    <div class="grp w43"><i class="grip"></i><b><svg><use href="#rectp"/></svg></b></div>
    <div class="grp w74"><i class="grip"></i><b><svg><use href="#osm"/></svg></b><b><svg><use href="#osm2"/></svg></b></div>
    <div class="grp last"><i class="grip"></i><b><svg><use href="#hammer"/></svg></b><b><svg><use href="#scrollg"/></svg></b></div>
  </div>

  <main class="work">
    <aside class="docks">
      <section class="dock browser">
        <h2>Browser<svg class="s9"><use href="#float"/></svg><svg class="s9"><use href="#x"/></svg></h2>
        <div class="tools"><svg><use href="#sadd"/></svg><svg><use href="#refresh"/></svg><svg><use href="#funnel"/></svg><svg><use href="#collapse"/></svg><svg><use href="#info"/></svg></div>
        <div class="tree">
          <div class="rows">
            <div class="row d3"><i></i><svg><use href="#poly"/></svg><span>cb_2015_us_state_500k</span></div>
            <div class="row d3"><i></i><svg><use href="#pts"/></svg><span>fpa_fod_20150323 fires</span></div>
            <div class="row d1"><svg class="tw"><use href="#dn"/></svg><svg><use href="#pg"/></svg><span>PostGIS</span></div>
            <div class="row d2"><svg class="tw"><use href="#rt"/></svg><svg><use href="#conn"/></svg><span>gisdb</span></div>
            <div class="row d2"><svg class="tw"><use href="#rt"/></svg><svg><use href="#conn"/></svg><span>historic_tornado_analysis</span></div>
            <div class="row d2"><svg class="tw"><use href="#rt"/></svg><svg><use href="#conn"/></svg><span>map671</span></div>
            <div class="row d2"><svg class="tw"><use href="#dn"/></svg><svg><use href="#conn"/></svg><span>qgis_db</span></div>
            <div class="row d3"><svg class="tw"><use href="#dn"/></svg><svg><use href="#db"/></svg><span>ky</span></div>
            <div class="row d4"><i></i><svg><use href="#poly"/></svg><span>counties</span></div>
            <div class="row d4"><i></i><svg><use href="#tbl"/></svg><span>fire_analysis</span></div>
            <div class="row d4"><i></i><svg><use href="#poly"/></svg><span>hexgrid_5mile</span></div>
            <div class="row d4 sel"><i></i><svg><use href="#polyb"/></svg><span>state</span></div>
            <div class="row d4"><i></i><svg><use href="#tbl"/></svg><span>wildfire_by_5mi_hexagon</span></div>
            <div class="row d4"><i></i><svg><use href="#poly"/></svg><span>wildfire_by_county</span></div>
            <div class="row d4"><i></i><svg><use href="#pts"/></svg><span>wildfires</span></div>
            <div class="row d3"><svg class="tw"><use href="#rt"/></svg><svg><use href="#db"/></svg><span>module_04</span></div>
          </div>
          <div class="vscroll"><svg class="tw"><use href="#up"/></svg><div class="thumb"></div><svg class="tw"><use href="#dn"/></svg></div>
        </div>
      </section>
      <section class="dock layers">
        <h2>Layers<svg class="s9"><use href="#float"/></svg><svg class="s9"><use href="#x"/></svg></h2>
        <div class="tools"><svg><use href="#brush"/></svg><svg><use href="#addgrp"/></svg><svg><use href="#eye"/></svg><svg><use href="#funnel"/></svg><svg class="eps" viewBox="0 0 24 24"><use href="#epsg" width="24" height="24"/></svg><em class="dim"></em><svg><use href="#expand"/></svg><svg><use href="#collapse"/></svg><svg><use href="#srem"/></svg></div>
        <div class="list">
          <div class="lrow"><i class="tw"></i><svg class="cb" viewBox="0 0 13 13"><path d="M2.500 6.500l3 3 5.500-6"/></svg><span class="sw white"></span><span class="nm">counties</span></div>
          <div class="lrow cur"><svg class="tw"><use href="#dn"/></svg><svg class="cb" viewBox="0 0 13 13"><path d="M2.500 6.500l3 3 5.500-6"/></svg><svg class="ras"><use href="#raster"/></svg><span class="nm ul">Heatmap</span></div>
          <div class="opac"><span>Opacity</span><div class="slider"><div class="knob"></div></div></div>
          <div class="leg"><span class="sw"></span>2.025e-07</div>
          <div class="leg"><span class="sw c1"></span>281</div>
          <div class="leg"><span class="sw c2"></span>562</div>
          <div class="leg"><span class="sw c3"></span>843</div>
          <div class="leg"><span class="sw c4"></span>1124</div>
          <div class="lrow off"><svg class="tw"><use href="#rt"/></svg><svg class="cb" viewBox="0 0 13 13"></svg><svg class="ras"><use href="#rasterg"/></svg><span class="nm">Heatmap</span></div>
          <div class="lrow off"><svg class="tw"><use href="#rt"/></svg><svg class="cb" viewBox="0 0 13 13"></svg><svg class="ico"><use href="#poly"/></svg><span class="nm">Wildfires by 5 Mile Hexagons</span></div>
          <div class="lrow off"><svg class="tw"><use href="#rt"/></svg><svg class="cb" viewBox="0 0 13 13"></svg><svg class="ico"><use href="#pts"/></svg><span class="nm">wildfires</span></div>
          <div class="lrow"><i class="tw"></i><svg class="cb" viewBox="0 0 13 13"><path d="M2.500 6.500l3 3 5.500-6"/></svg><span class="sw gray"></span><span class="nm">state</span></div>
        </div>
      </section>
    </aside>
    <div class="map">
      <svg class="land" viewBox="356 155 1229 856">
        <g class="fill">
          <path data-x="360" data-y="450" transform="translate(360 450) scale(.33333)" d="M130 988L150 925 165 913 178 918 190 940 205 953 220 950 232 930 238 912 252 900 250 885 238 870 236 855 245 847 265 849 275 840 272 829 255 825 248 812 250 798 268 792 283 740 286 728 280 716 265 712 252 695 250 680 262 660 285 642 296 618 315 595 340 579 370 581 400 592 430 606 460 630 500 640 525 655 540 672 560 680 580 677 590 655 599 632 593 605 575 575 562 552 565 535 578 515 580 490 600 477 618 476 633 488 655 465 680 458 720 456 762 450 772 432 765 410 740 385 735 355 729 345 732 325 745 310 775 295 785 268 795 263 808 268 824 280 832 268 847 258 846 235 832 215 840 200 853 192 865 203 880 221 905 217 925 210 948 210 957 218 948 235 955 250 970 252 985 245 992 225 978 205 980 185 987 180 988 168 996 170 998 185 1010 198 1028 207 1045 193 1070 186 1090 192 1118 213 1140 230 1165 247 1186 252 1195 275 1207 282 1222 275 1232 255 1240 225 1250 208 1270 200 1300 194 1320 175 1340 160 1350 165 1360 190 1378 218 1390 220 1405 208 1418 215 1412 235 1418 250 1435 245 1442 208 1470 206 1480 195 1475 170 1475 140 1503 136V932L1475 933 1452 942 1438 933 857 935 857 917 775 905 752 900 765 950 770 985 765 1005 740 1009 400 995 180 987zM62 945L75 938 95 941 107 955 107 970 98 987 75 987 63 970z"/>
          <path data-x="860" data-y="270" transform="translate(860 270) scale(.33333)" d="M0 672L15 665 18 650 5 640 8 630 20 632 30 638 38 628 60 625 68 615 45 605 42 593 52 588 65 598 78 605 88 622 88 660 105 680 135 695 160 693 180 708 192 725 205 706 245 698 255 675 255 610 270 585 285 570 288 545 305 537 327 548 350 537 370 510 380 488 385 455 405 442 440 435 458 410 478 395 475 370 466 340 465 315 460 295 475 280 500 285 515 277 545 277 560 295 580 307 605 298 655 265 700 252 745 248 742 225 758 210 750 190 722 182 720 170 738 148 730 125 710 95 730 75 755 62 773 43 790 52 805 68 832 84 855 76 870 68 885 72 893 58 905 56 912 68 915 93 955 103 975 122 980 150 1003 190 1008 225 1020 237 1060 248 1095 253 1130 243 1155 256 1178 263 1185 282 1208 295 1215 315 1240 322 1260 331V800H0z"/>
          <path data-x="1200" data-y="330" transform="translate(1200 330) scale(.33333)" d="M0 58L30 62 60 73 90 65 110 64 133 74 155 80 165 100 187 112 195 135 220 143 245 151 255 145 258 127 275 118 310 108 330 122 375 128 395 140 403 160 430 150 478 150 490 120 520 108 540 88 575 73 597 70 598 100 607 130 610 160 630 178 670 181 690 205 720 225 728 250 728 290 739 315 737 350 725 360 728 380 713 403 735 435 765 480 793 510 790 530 815 555 825 590 860 625 862 640 880 680 910 695 935 700 955 738 975 748 1005 753 1032 750 1005 780 990 800H0z"/>
          <path data-x="1180" data-y="520" transform="translate(1180 520) scale(.33333)" d="M0 -20H850L920 100 1000 170 1092 182 1060 212 1035 240 1000 270 975 298 930 332 880 355 845 372 800 400 760 432 755 470 740 492 690 520 695 550 685 570 655 588 600 590 580 620 575 652 550 656 500 672 450 695 400 702 370 712 340 732 320 750 200 752 0 750z"/>
          <path data-x="860" data-y="520" transform="translate(860 520) scale(.33333)" d="M-3 -10H970V751L776 750 680 740 600 738 540 737 470 744 340 742 150 733 -3 722z"/>
        </g>
        <g class="edge">
          <path transform="translate(360 450) scale(.33333)" d="M1500 932L1475 933 1452 942 1438 933 857 935 857 917 775 905 752 900 765 950 770 985 765 1005 740 1009 400 995 180 987 130 988 150 925 165 913 178 918 190 940 205 953 220 950 232 930 238 912 252 900 250 885 238 870 236 855 245 847 265 849 275 840 272 829 255 825 248 812 250 798 268 792 283 740 286 728 280 716 265 712 252 695 250 680 262 660 285 642 296 618 315 595 340 579 370 581 400 592 430 606 460 630 500 640 525 655 540 672 560 680 580 677 590 655 599 632 593 605 575 575 562 552 565 535 578 515 580 490 600 477 618 476 633 488 655 465 680 458 720 456 762 450 772 432 765 410 740 385 735 355 729 345 732 325 745 310 775 295 785 268 795 263 808 268 824 280 832 268 847 258 846 235 832 215 840 200 853 192 865 203 880 221 905 217 925 210 948 210 957 218 948 235 955 250 970 252 985 245 992 225 978 205 980 185 987 180 988 168 996 170 998 185 1010 198 1028 207 1045 193 1070 186 1090 192 1118 213 1140 230 1165 247 1186 252 1195 275 1207 282 1222 275 1232 255 1240 225 1250 208 1270 200 1300 194 1320 175 1340 160 1350 165 1360 190 1378 218 1390 220 1405 208 1418 215 1412 235 1418 250 1435 245 1442 208 1470 206 1480 195 1475 170 1475 140 1490 136 1500 132M62 945L75 938 95 941 107 955 107 970 98 987 75 987 63 970z"/>
          <path transform="translate(860 270) scale(.33333)" d="M0 672L15 665 18 650 5 640 8 630 20 632 30 638 38 628 60 625 68 615 45 605 42 593 52 588 65 598 78 605 88 622 88 660 105 680 135 695 160 693 180 708 192 725 205 706 245 698 255 675 255 610 270 585 285 570 288 545 305 537 327 548 350 537 370 510 380 488 385 455 405 442 440 435 458 410 478 395 475 370 466 340 465 315 460 295 475 280 500 285 515 277 545 277 560 295 580 307 605 298 655 265 700 252 745 248 742 225 758 210 750 190 722 182 720 170 738 148 730 125 710 95 730 75 755 62 773 43 790 52 805 68 832 84 855 76 870 68 885 72 893 58 905 56 912 68 915 93 955 103 975 122 980 150 1003 190 1008 225 1020 237"/>
          <path transform="translate(1200 330) scale(.33333)" d="M0 57L30 62 60 73 90 65 110 64 133 74 155 80 165 100 187 112 195 135 220 143 245 151 255 145 258 127 275 118 310 108 330 122 375 128 395 140 403 160 430 150 478 150 490 120 520 108 540 88 575 73 597 70 598 100 607 130 610 160 630 178 670 181 690 205 720 225 728 250 728 290 739 315 737 350 725 360 728 380 713 403 735 435 765 480 793 510 790 530 815 555 825 590 860 625 862 640 880 680 910 695 935 700 955 738 975 748 1005 753 1032 750"/>
          <path transform="translate(860 520) scale(.33333)" d="M1980 237L2052 182 2020 212 1995 240 1960 270 1935 298 1890 332 1840 355 1805 372 1760 400 1720 432 1715 470 1700 492 1650 520 1655 550 1645 570 1615 588 1560 590 1540 620 1535 652 1510 656 1460 672 1410 695 1360 702 1330 712 1300 732 1280 750 1160 752 960 751 776 750 680 740 600 738 540 737 470 744 340 742 150 733 0 722"/>
          <path transform="translate(860 270) scale(.33333)" d="M1003 190L1008 225 1020 237 1060 248"/>
        </g>
      </svg>
      <canvas class="heat" width="1229" height="856"></canvas>
      <svg class="land counties" viewBox="356 155 1229 856">
        <g transform="translate(360 450) scale(.33333)">
          <path d="M370 581L416 740 414 842 409 842 408 995M416 742L567 748M525 655L550 698 568 703 585 698 610 685 635 683 655 693 683 728 702 755 720 797 737 865 757 905M570 703L566 859 560 999M566 859L737 865M272 829L295 828 298 838 414 842M248 906L310 940 350 943 370 955 400 993M720 797L790 773 846 745 805 685 775 622 753 618 755 595 870 522 925 496 985 462 1030 447 1085 402M633 488L655 492 662 525 695 565 703 595 698 615 708 645M825 450L920 360 1030 356M838 205L870 255 885 282M910 290L913 345 920 360M940 638L1015 665 1030 655 1085 652 1100 640M940 638L925 710 900 738 855 750 846 745M915 725L947 745 940 860 930 932M1132 283L1110 303 1085 308 1072 338 1050 345 1030 356 1032 378 1045 388 1075 388 1085 402 1092 430 1092 480 1115 508M1072 338L1150 378 1200 400 1238 407 1275 370 1338 347 1320 325 1338 310 1428 356 1405 280 1410 240M1428 356L1422 380M1410 418L1432 507 1365 557M1238 407L1205 460 1210 490 1208 515 1193 535 1205 543 1215 522 1230 518 1250 530 1262 550 1265 575M1115 508L1160 510 1175 493 1210 493M1135 703L1200 704 1260 690 1330 700 1402 733 1430 800 1443 830 1500 838M1130 703L1095 932M1228 697L1226 850 1221 932M1402 733L1428 628M1432 507L1490 525 1500 558M1428 800L1395 820 1370 870 1360 932"/>
          <path class="r" d="M286 742L300 750 340 750 380 742 416 740M753 618L735 632 708 645 695 660 690 690 688 715 683 728M772 432L795 410 800 435 825 450M885 282L910 290M825 450L830 488 865 488 880 505 888 520 868 540 888 560 890 595 920 620 940 638M1118 213L1112 250 1132 283M1270 203L1300 220 1305 250 1325 255 1340 280 1338 310M1422 380L1440 418 1480 380 1500 395M1440 410L1410 418M1115 508L1105 540 1080 550 1080 580 1095 600 1098 640 1120 665 1135 700M1265 575L1298 605 1288 650 1300 670 1285 688M1365 557L1350 542 1335 560 1300 605M1428 628L1500 630"/>
        </g>
        <g transform="translate(860 270) scale(.33333)">
          <path d="M830 84L841 195 835 240 815 250 758 210M835 240L870 245 925 235 1003 197M874 245L899 388 900 405 865 418M815 250L762 262 765 345 808 380M850 425L865 418M1008 225L1020 362 925 378M655 265L690 322M515 285L560 340 570 367 635 358M585 370L538 415 470 403M523 418L510 437 520 470 537 496 683 510 667 545 660 628M667 508L710 487M783 498L850 428M783 498L788 590 728 618 725 640 660 628M865 418L885 460 910 490 920 540M1030 485L1068 432M380 488L455 537 482 550 475 620 470 638 415 659 345 652 270 675 245 698M510 525L537 496M475 620L620 678 658 628M453 645L433 697 490 737 590 717 597 762M832 630L820 697 800 780M820 697L870 715 905 740 920 780M832 630L930 580M990 660L1083 628 1135 733M1083 628L1125 598M1118 356L1155 256M1118 356L1130 375 1135 400 1145 412 1120 445M1145 412L1178 431 1275 385M1190 520L1125 598 1170 615 1205 650 1228 690M213 705L222 780M0 683L110 780"/>
          <path class="r" d="M885 72L890 110 912 140 905 180 910 220 925 235M808 380L850 425M925 378L900 392M760 285L690 322 635 358M635 358L655 400 690 440 715 465 710 490 760 503 783 498M920 540L930 575M920 540L975 525 1030 485M455 537L510 525M620 678L595 705M433 697L440 710 410 745 395 780M725 640L745 660 748 720 760 780M748 720L700 735 650 765 605 750 570 780M788 590L825 600 832 630M930 575L955 600 955 640 990 660 970 750 925 780M965 755L1050 765 1100 780M1030 485L1075 540 1130 575V598M1068 432L1035 400 1040 375 1020 362M1040 375L1075 350 1118 356M1068 432L1120 445 1160 485 1190 520 1230 530 1260 570M1135 733L1185 748 1228 740V690M245 698L260 735 285 745 290 780"/>
        </g>
        <g transform="translate(1200 330) scale(.33333)">
          <path d="M258 150L255 210 285 262 340 288M395 323L438 315 442 260 470 215 520 240 560 275 650 290 643 362 690 350 738 348M632 285L655 248 692 212M395 323L410 380 437 400 458 408 430 440 435 475 460 498 545 502M430 440L380 470 345 490M585 403L600 438 575 480 545 502 570 550M355 490L355 540 328 585 310 608 268 610 203 565M268 610L238 672M328 600L380 620 410 645M555 520L580 503 630 520 700 560 735 563"/>
          <path class="r" d="M340 288L320 350 262 405M240 360L262 405 300 440 340 490M340 288L362 283 395 323M470 215L505 160 530 110 540 88M437 400L475 352 525 392 585 403 632 380 643 362M345 485L292 480 292 500 208 512 203 555M410 645L445 690M735 563L745 520 795 520M735 563L710 590 718 650M500 565L550 575 570 550M500 565L435 640 445 690"/>
        </g>
        <g transform="translate(1180 520) scale(.33333)">
          <path d="M298 102L380 147 358 222M175 30L180 62 225 80M108 155L122 190M72 218L95 193 180 185 210 205 245 235 280 235M72 218L95 290 103 325M210 205L240 260 265 318 225 335 210 368 195 373 190 410 200 445 230 465 230 488M378 320L415 295 440 318M560 275L562 240 580 210 645 218M645 95L725 72 780 85 810 105 800 200 810 250 800 300 770 330 750 345M565 275L575 330 570 370 635 402 690 355 750 345M390 375L440 332 460 345 480 380 530 405M635 402L605 430 605 490 580 505 548 497 520 510 450 560 405 570M230 488L300 520 395 547M230 488L200 522 130 540 140 590 175 640M230 690L265 630 325 595 368 548M565 510L560 532 655 500 690 515M30 550L12 630 25 690 62 742M0 397L35 427"/>
          <path class="r" d="M610 0L640 40 645 95 670 190 658 225M298 102L245 150 210 200M225 80L298 102M380 147L400 155 440 112 505 125 560 160 610 190 650 218M120 0L130 90 108 155M0 210L72 215M280 235L310 215 358 222 378 290 378 350 390 375 375 430 385 490 398 545 405 572 400 650 415 700M103 325L150 370 195 373M265 318L320 315 375 360M440 318L520 260 560 275M810 105L890 100 890 80 925 70M658 225L700 240 705 265 735 265 740 320 750 345 825 385M530 405L550 450 548 495M130 540L60 545 0 550M175 640L230 690 195 715 215 745M103 325L70 360 45 385 35 430 25 500 10 550"/>
        </g>
        <g transform="translate(860 520) scale(.33333)">
          <path d="M75 0L143 66 208 55 222 20 220 0M143 66L88 185M358 105L330 150 270 215 262 270M190 266L370 282M485 108L450 160 433 205M485 108L505 145 550 162 652 162M655 12L663 35 650 285 635 285M658 134L790 112M735 212L720 217 652 212M885 80L930 150 965 210 958 247 915 240 820 165M735 212L735 275 800 320 800 385 872 318 897 332 918 240M897 332L990 425M800 385L715 458 690 463 648 415 643 375 595 347 612 315 635 285M507 412L430 460 385 455 358 420 352 340 370 282M400 258L455 315 490 385 507 412M145 335L188 400 178 493 125 483 110 465 85 478 28 428 0 348M188 430L265 440 358 420M328 430L315 440 322 470 330 613 395 618M330 615L222 680M158 492L135 565M0 630L25 632 20 722M430 460L437 520 467 553 460 585M467 560L565 567 575 525 648 415M565 567L545 580 570 600 538 737M570 590L618 622 660 592M715 458L715 497 745 525 780 545 815 535 860 590M643 608L670 670 672 740M865 597L970 548M825 665L776 750"/>
          <path class="r" d="M0 190L88 185 160 200 190 265 185 325 0 340M285 10L335 62 400 15M335 62L358 105 395 130 405 180 385 215 430 205 455 250M485 108L540 45 600 5 655 12M790 112L820 160 735 212M760 0L800 50 800 110M800 50L860 100 910 40 965 5 1060 25M965 210L1035 218M370 282L375 262 400 258 470 250 548 285 600 262 635 285M595 347L540 380 507 412M135 565L25 650M135 565L180 600 190 650 222 680 228 735M0 435L28 428M460 585L400 600 400 640 450 690 470 742M660 592L700 548 745 525M862 590L865 640 825 665"/>
        </g>
      </svg>
    </div>
  </main>

  <footer class="status">
    <div class="locate"><svg viewBox="0 0 14 14"><circle cx="6" cy="6" r="4.300" fill="none" stroke="#888" stroke-width="1.300"/><path d="M9 9l4 4" stroke="#888" stroke-width="1.500"/></svg>Type to locate (Ctrl+K)</div>
    <div class="st">
      <span class="lb l1">Coordinate</span><span class="fld f1">4115320,3862930</span>
      <svg class="mouse" viewBox="0 0 16 16"><path d="M3 3l5 1 6 7 0 3-4 1-5-5z" fill="#ddd" stroke="#222" stroke-width="1.200"/><path d="M1 3l5 3M2 8l4-1M4 1l3 6M8 1l0 5M12 3L8 7M15 1l-4 4M1 11l5-2M9 9l3 3" stroke="#222" stroke-width="1.200"/></svg>
      <span class="lb l2">Scale</span><span class="fld f2">1:2196222<svg class="tw"><use href="#dn"/></svg></span>
      <svg class="lock" viewBox="0 0 12 15"><path d="M3 7V4q0-3 3-3t3 3v3" fill="none" stroke="#777" stroke-width="1.600"/><rect x=".5" y="6.500" width="11" height="8" rx="1" fill="#666"/></svg>
      <span class="lb l3">Magnifier</span><span class="fld f3">100%<i class="spin"></i></span>
      <span class="lb l4">Rotation</span><span class="fld f4">0.0 °<i class="spin"></i></span>
      <svg class="cb" viewBox="0 0 13 13"><path d="M2.500 6.500l3 3 5.500-6"/></svg><span class="lb l5">Render</span>
      <svg class="crs" viewBox="0 0 16 16"><circle cx="8" cy="8" r="6.500" fill="#bbb" stroke="#666"/><path d="M1 8h14M8 1v14M3 4.500h10M3 11.500h10M8 1Q2 8 8 15M8 1q6 7 0 14" fill="none" stroke="#666"/></svg>
      <span class="lb l6">EPSG:3089</span>
      <svg class="bub" viewBox="0 0 18 16"><path d="M9 1c10 0 11 12 2 12l0 3-4-3C-2 12-1 1 9 1z" fill="#555"/><path d="M4.500 7h2M8 7h2M11.500 7h2" stroke="#fff" stroke-width="1.800"/></svg>
      <i class="sizer"></i>
    </div>
  </footer>
</div>
<script src="heat.js"></script>
</body>
</html>
```
FILE: styles.css
```css
* { box-sizing: border-box; }
body { margin: 0; background: #f0f0f0; font: 12px/20px "Open Sans", "Noto Sans", sans-serif; letter-spacing: -.32px; color: #000; }
.defs { position: absolute; width: 0; height: 0; }
.ic { font-family: "Open Sans", sans-serif; letter-spacing: -.4px; }
.is { font-family: "Liberation Serif", serif; font-style: italic; font-weight: 700; }
.is2 { font-family: "Liberation Serif", serif; }
.window { width: 1586px; height: 1040px; border: 1px solid #1883d7; display: flex; flex-direction: column; overflow: hidden; }
.title { height: 30px; background: #fff; display: flex; align-items: center; padding: 0 13px 0 8px; flex: none; }
.logo { width: 16px; height: 16px; margin-right: 5px; }
.winbtns { width: 115px; height: 20px; margin-left: auto; margin-right: -4px; }
.menu { height: 21px; background: #fff; display: grid; grid-template-columns: 53px 36px 41px 44px 58px 55px 49px 48px 64px 40px 64px 73px 40px; padding-left: 8px; align-items: center; flex: none; white-space: nowrap; }
.menu u { text-underline-offset: 2px; }

.bar { height: 34px; flex: none; display: flex; border-bottom: 1px solid #b4b4b4; border-top: 1px solid #fafafa; background: #f0f0f0; }
.grp { display: flex; align-items: center; border-right: 1px solid #b4b4b4; flex: none; }
.grp.last { border: 0; }
.grip { width: 9px; height: 26px; flex: none; background: radial-gradient(circle, #b4b4b4 1.1px, transparent 1.5px) 3px 0/4px 4px repeat-y; }
.w229 { width: 229px; }
.w446 { width: 446px; } .w446 .grip { width: 10px; }
.w260 { width: 260px; } .w43 { width: 43px; } .w148 { width: 148px; } .w74 { width: 74px; } .w12 { width: 12px; }
.w396 { width: 396px; } .w167 { width: 167px; }
.grp b { width: 31px; height: 31px; flex: none; display: flex; align-items: center; justify-content: center; position: relative; font-weight: 400; }
.grp b svg { width: 24px; height: 24px; }
.grp b.on { background: #c0dcf3; box-shadow: inset 0 0 0 1px #90c8f6; }
.grp b.corner::after { content: ""; position: absolute; right: 3px; bottom: 3px; border: 3px solid transparent; border-top-color: #888; border-bottom: 0; }
em { width: 12px; flex: none; display: flex; justify-content: center; }
em::after { content: ""; border: 4px solid transparent; border-top: 4.5px solid #222; border-bottom: 0; }
em.dim::after { border-top-color: #666; }

.work { flex: 1; display: flex; min-height: 0; }
.docks { width: 350px; margin-right: 4px; padding-top: 2px; display: flex; flex-direction: column; flex: none; }
.dock { display: flex; flex-direction: column; }
.browser { height: 355px; }
.layers { flex: 1; margin-top: 5px; }
h2 { font-size: 12px; font-weight: 400; line-height: 17px; height: 19px; margin: 0; padding: 1px 6px 0 5px; background: #dadada; border: 1px solid #bdbdbd; display: flex; align-items: center; border-left: 0; }
h2 .s9 { width: 9px; height: 9px; margin: -1px 0 0 12px; }
h2 .s9:nth-of-type(1) { margin-left: auto; }
.tools { height: 28px; flex: none; display: flex; align-items: center; padding: 1px 0 0 5px; gap: 7px; }
.tools svg { width: 16px; height: 16px; }
.tools em { margin: 0 -2px 0 -5px; }
.tree { flex: 1; min-height: 0; background: #fff; border: 1px solid #828790; display: flex; overflow: hidden; }
.rows { flex: 1; }
.row { height: 20px; display: flex; align-items: center; white-space: nowrap; }
.row > svg, .row > i { width: 16px; height: 16px; flex: none; }
.row > i, .row > .tw { width: 10px; height: 10px; margin-right: 8px; }
.row > svg + span { padding-left: 6px; }
.d1 { padding-left: 5px; } .d2 { padding-left: 25px; } .d3 { padding-left: 45px; } .d4 { padding-left: 65px; }
.sel { background: linear-gradient(#d9d9d9, #d9d9d9) 80px 0/224px 20px no-repeat; }
.vscroll { width: 16px; background: #f0f0f0; display: flex; flex-direction: column; align-items: center; padding: 4px 0; justify-content: space-between; margin-right: 1px; }
.vscroll .tw { width: 10px; height: 10px; }
.thumb { width: 15px; height: 55px; background: #cdcdcd; margin-bottom: 41px; }
.list { flex: 1; background: #fff; border: 1px solid #828790; }
.lrow { height: 20px; display: flex; align-items: center; font-weight: 700; letter-spacing: -.42px; }
.nm { padding-top: 1px; height: 21px; }
.lrow > .tw { width: 10px; height: 10px; margin: 0 13px 0 5px; }
.cb { width: 13px; height: 13px; background: #fff; border: 1px solid #333; fill: none; stroke: #222; stroke-width: 1.300; overflow: visible; }
.lrow > .cb { margin: 0 6px 0 -5px; flex: none; }
.lrow .ras { width: 14px; height: 14px; margin: 0 7px 0 1px; }
.lrow .ico { width: 17px; height: 16px; margin-right: 5px; }
.sw { width: 16px; height: 16px; display: inline-block; flex: none; }
.lrow .sw { margin-right: 6px; }
.white { border: 1px solid #aaa; } .gray { background: #6e6e6e; border: 1px solid #333; }
.cur { background: linear-gradient(#d9d9d9, #d9d9d9) 20px 0/330px 20px no-repeat; }
.ul { text-decoration: underline; }
.off { color: #bdbdbd; }
.opac { height: 40px; display: flex; align-items: center; padding: 1px 0 0 49px; gap: 3px; }
.opac span { padding-top: 1px; }
.slider { width: 247px; height: 22px; border: 1px dotted #000; padding: 0 72px; background: linear-gradient(#d6d6d6, #e7eaea 30% 70%, #d6d6d6) 0 8px/100% 4px no-repeat; }
.knob { width: 10px; height: 20px; background: #0078d7; }
.leg { height: 20px; line-height: 22px; display: flex; align-items: center; padding-left: 43px; gap: 6px; }
.c1 { background: #fdcc8a; } .c2 { background: #fc8d59; } .c3 { background: #e34a33; } .c4 { background: #b30000; }

.map { flex: 1; background: #424242; display: grid; border-left: 1px solid #777; border-top: 1px solid #777; min-height: 0; overflow: hidden; }
.land, .heat { grid-area: 1/1; width: 1229px; height: 856px; }
.fill { fill: #6e6e6e; }
.edge path, .counties path { fill: none; stroke: #262626; stroke-width: 1.9px; stroke-linejoin: round; vector-effect: non-scaling-stroke; }
.counties path { stroke: #2c2c2c; stroke-width: 1.05px; }

.status { height: 27px; flex: none; display: flex; align-items: center; padding: 1px 0 0 4px; }
.locate { width: 200px; height: 20px; background: #fff; border: 1px solid #7a7a7a; color: #777; display: flex; align-items: center; line-height: 18px; padding-left: 8px; }
.locate svg { width: 13px; height: 13px; margin-right: 6px; }
.st { margin-left: auto; display: flex; align-items: center; font-size: 9px; letter-spacing: -.55px; white-space: nowrap; }
.lb { flex: none; }
.l1 { width: 41px; } .l2 { width: 21px; } .l3 { width: 35px; } .l4 { width: 38px; } .l5 { width: 42px; } .l6 { width: 52px; }
.fld { height: 20px; background: #fff; border: 1px solid #7a7a7a; display: flex; align-items: center; justify-content: space-between; padding-left: 3px; flex: none; }
.f1 { width: 75px; padding-left: 7px; } .f2 { width: 78px; padding-right: 3px; } .f3 { width: 82px; } .f4 { width: 80px; }
.f2 .tw { width: 9px; height: 9px; }
.mouse { width: 16px; height: 16px; margin: 0 12px 0 4px; }
.lock { width: 12px; height: 15px; margin: 0 9px 0 11px; }
.l4 { margin-left: 9px; }
.st .cb { margin: 0 5px 0 6px; }
.spin { width: 12px; height: 18px; border: 1px solid #999; background: conic-gradient(from 153deg at 50% 15%, #111 54deg, transparent 0) 50% 3px/7px 5px no-repeat, conic-gradient(from -27deg at 50% 85%, #111 54deg, transparent 0) 50% 10px/7px 4px no-repeat, linear-gradient(#999, #999) 0 8px/100% 1px no-repeat, #f0f0f0; }
.crs { width: 15px; height: 15px; margin-right: 4px; }
.bub { width: 17px; height: 15px; margin-right: 15px; }
.sizer { width: 9px; height: 9px; margin: 12px 1px 0 0; background: radial-gradient(#b5b5b5 1px, transparent 1.3px) 0 0/3px 3px; clip-path: polygon(100% 0, 100% 100%, 0 100%); }
```
FILE: heat.js
```js
// Kernel-density heatmap: quartic kernel summed per pixel, then coloured by a ramp.
const X0 = 356, Y0 = 155, W = 1229, H = 856;
const field = new Float32Array(W * H);

let seed = 20150323;
const rnd = () => ((seed = (seed * 1664525 + 1013904223) >>> 0) / 4294967296);

// River boundaries meander: resample each segment and nudge the points sideways.
for (const path of document.querySelectorAll(".r")) {
  const out = [];
  for (const sub of path.getAttribute("d").split("M").filter(Boolean)) {
    const one = document.createElementNS("http://www.w3.org/2000/svg", "path");
    one.setAttribute("d", "M" + sub);
    const len = one.getTotalLength(), n = Math.max(2, Math.round(len / 6));
    for (let i = 0; i <= n; i++) {
      const p = one.getPointAtLength(len * i / n), k = i === 0 || i === n ? 0 : 9;
      out.push((i ? "L" : "M") + (p.x + (rnd() - .5) * k).toFixed(1) + " " + (p.y + (rnd() - .5) * k).toFixed(1));
    }
  }
  path.setAttribute("d", out.join(""));
}

function add(px, py, w, R = 6.4) {
  const cx = px - X0, cy = py - Y0;
  for (let y = Math.max(0, Math.floor(cy - R)); y <= cy + R && y < H; y++)
    for (let x = Math.max(0, Math.floor(cx - R)); x <= cx + R && x < W; x++) {
      const u = ((x - cx) ** 2 + (y - cy) ** 2) / (R * R);
      if (u < 1) field[y * W + x] += w * (1 - u) * (1 - u);
    }
}

// Fire clusters: tile origin, then "x,y,weight" in third-pixels.
const tiles = [
  [360, 450, "762,899,2 780,949,2 1287,549,2.5 1273,560,1.5 1296,560,1.5 893,481,.45 1051,641,.7 1078,545,.3 1103,562,.25 1115,556,.25 1134,573,.4 1175,567,.6 1204,574,.6 1216,551,.4 1243,544,.35 1251,572,.6 1232,608,.4 1268,575,.6 734,738,.28 735,755,.28 767,839,.3 1253,856,.28 651,810,.2 689,933,.15 693,725,.25 635,550,.2 1401,223,.4 1292,431,.18 1403,505,.22 910,573,.2 953,463,.27 890,508,.27 926,496,.18 1102,720,.18 1159,648,.2 1097,628,.27 1102,598,.2 920,650,.2 938,814,.15 921,886,.15 1000,565,.15 1018,565,.15 1054,592,.13 986,630,.16 968,658,.14 1005,662,.16 1033,688,.12 1200,618,.15 1190,590,.18 1260,612,.18 1242,592,.25 1241,500,.2 1318,208,.14 893,245,.12 1042,213,.1 1063,262,.1 828,337,.1 820,372,.1 1181,420,.15 1058,483,.13 995,756,.13 1073,881,.12 855,887,.08 661,862,.12 592,702,.14 577,885,.1 1479,316,.14 1485,355,.13 1490,195,.2 1427,678,.2 1445,603,.15 1341,462,.1 1375,483,.1 1399,372,.1 1294,805,.12 1266,812,.1 951,512,.14 910,645,.18 1288,535,.5"],
  [860, 270, "586,483,.18 770,182,.08 869,187,.14 897,185,.12 818,287,.08 783,275,.06 943,272,.07 912,345,.09 863,372,.08 750,378,.06 605,401,.07 421,464,.07 903,412,.06 838,510,.05 255,698,.35 235,708,.2 145,741,.12 65,749,.16 673,692,.08 653,748,.12 573,675,.07 330,680,.07 1255,655,.4 1250,672,.2 1138,550,.08 1095,316,.06 1148,750,.2 1190,754,.2 640,770,.14"],
  [1200, 330, "394,177,2 326,444,1.8 448,493,1.7 428,480,.5 487,260,.8 339,172,.65 328,195,.2 542,94,1 530,112,.8 548,110,.4 634,222,.55 542,296,.6 546,322,.3 517,438,.9 535,462,.3 689,365,.5 735,518,2.4 728,530,2 755,530,1.3 725,482,.7 748,495,.7 740,470,.4 547,563,1.3 778,568,1.3 715,585,0 433,156,.3 416,172,.2 533,147,.27 514,200,.27 532,217,.3 583,162,.28 572,165,.15 506,165,.2 480,205,.25 473,185,.15 417,258,.3 449,322,.28 397,400,.3 360,410,.18 380,385,.15 350,325,.16 290,130,.1 333,268,.14 570,262,.28 560,270,.15 610,245,.2 660,222,.18 663,275,.2 640,275,.2 597,296,.25 605,320,.25 600,342,.3 615,342,.3 510,350,.28 515,340,.2 575,380,.28 632,375,.22 718,385,.28 728,345,.2 500,375,.12 460,372,.12 236,475,.25 293,490,.28 232,500,.15 625,435,.15 585,480,.2 535,472,.25 527,518,.2 565,490,.2 680,490,.25 685,517,.25 590,536,.22 645,540,.28 508,558,.5 695,560,.4 625,562,.35 808,555,.5 440,538,.18 400,535,.12 280,298,.1 575,130,.12"],
  [860, 520, "879,458,2 870,545,1 884,611,.8 855,651,2 865,721,2 741,643,1.5 633,608,1.8 666,598,1.3 657,692,1.7 645,680,.8 792,655,1 806,660,.5 825,675,.7 535,585,.9 428,606,1 395,650,1.2 398,703,.6 405,672,.6 390,608,.5 408,632,.4 702,562,.6 697,575,.6 688,583,.5 62,336,.6 69,369,.6 279,223,.32 161,282,.27 219,168,.23 250,168,.13 270,172,.1 775,336,.4 800,297,.35 947,672,1 940,688,.7 715,690,.5 742,707,.5 768,715,.4 776,745,.4 610,610,.5 596,616,.25 903,493,.25 668,514,.18 747,508,.22 463,486,.15 776,628,.3 785,608,.25 893,525,.2 853,271,.2 870,265,.2 775,272,.12 730,355,.14 703,350,.14 680,358,.13 745,383,.14 653,390,.16 705,430,.16 690,390,.1 600,410,.12 380,425,.15 388,355,.1 465,200,.14 365,120,.18 342,70,.2 82,548,.12 163,430,.13 377,292,.14 40,293,.14 205,215,.09 192,128,.1 419,42,.1 903,215,.15 560,270,.12 682,290,.14 907,740,.3 893,698,.25 910,712,.2 456,648,.2 467,602,.25 485,720,.18 540,635,.14 365,720,.14 873,787,.08 790,588,.14 865,590,.2 905,640,.15 15,400,.18 565,555,.18"],
  [1180, 520, "157,145,2 180,135,.5 198,217,2 183,240,1 339,270,2 361,293,1.6 429,173,2 477,218,2.2 468,228,1 454,231,1.6 500,258,2 488,262,1.5 432,250,1 430,290,2 460,300,2 440,310,2 530,300,2 545,292,2 515,318,2 525,335,2 505,345,1.5 480,345,2 470,335,1.4 500,365,2 530,368,2 555,360,2 570,345,1.5 558,378,2 592,255,2 592,268,2 605,262,1.5 624,234,2.2 638,258,1.5 662,288,2 652,298,2 697,280,1.6 680,325,2 700,320,2 650,345,1.7 645,335,1 590,390,2 602,400,1.6 387,357,1.8 382,348,1 296,370,2 435,396,1.8 470,402,1.6 540,438,2 553,448,1.6 316,430,1.8 325,457,1.8 272,454,2 256,462,2 240,473,1.2 265,505,1.5 293,517,2 415,492,2.2 417,512,2 425,525,1.8 410,530,1.2 448,503,1.7 478,530,1.4 582,483,2 625,478,1.6 648,490,1.6 619,521,1.3 660,521,1.7 708,460,2 705,478,1.6 501,575,1.8 605,567,1.9 575,567,1.4 455,607,1.9 485,605,2 538,637,1.6 414,675,2 320,701,1.7 312,659,1.8 62,632,1.8 62,741,1.7 25,645,1.8 158,690,2 180,687,2 205,693,1.6 165,710,2 190,712,2 155,732,1.3 178,728,2 216,703,1.3 358,612,2.2 372,605,1.7 348,625,1.6 265,630,1.3 189,563,2 52,350,2 52,380,1.8 60,320,1.2 53,272,1 38,340,.8 75,298,.7 772,403,1.8 320,45,2 300,45,1.6 840,101,1.7 885,127,2 928,173,1.9 985,208,2.1 958,160,1.8 975,165,1.6 997,150,1.8 860,195,1.9 872,212,1.6 951,242,1.6 972,265,1.4 760,213,1.8 748,235,1.5 705,208,1.3 755,280,2 770,290,2 787,275,2 765,262,1.6 747,308,2 762,322,1.9 800,262,1.6 820,298,2.3 838,298,2.3 852,292,1.5 825,322,2 850,322,2 870,320,2 838,310,2 880,343,1.8 850,348,2 892,330,1.5 800,12,2 785,22,2 772,12,1.5 655,105,1.8 685,102,1.8 672,120,2 605,180,1.4 607,195,1.2 613,20,1.7 592,64,1.5 903,55,1.8 888,70,1.2 905,92,1.5 935,300,1.7 970,290,1.4 905,285,1.6 885,285,1.5 310,215,1.5 343,215,1.2 375,235,1.4 238,132,1.4 650,60,.9 625,55,1.1 675,155,1 665,175,.9 695,165,.7 715,165,.7 755,150,.7 215,752,1 120,709,1.2 90,709,.7 158,648,1.3 105,735,.4 130,735,.3 285,727,.5 370,710,.3 8,595,.4 20,680,.7 480,650,.7 570,632,.6 540,600,.7 415,620,.7 245,525,1 250,565,.8 270,555,.7 285,590,1 210,595,.6 195,605,.6 220,608,.3 310,320,1.2 262,303,1 270,355,1 240,385,.8 250,395,.7 193,415,.5 243,435,.8 335,485,.6 343,520,.8 405,395,.8 410,425,.9 468,437,1 430,467,.7 410,470,.8 497,510,.9 487,553,.5 515,445,.8 645,403,1.2 668,380,.8 710,418,.6 845,372,.9 870,37,.8 838,5,.9 750,57,.8 1030,240,.5 1033,200,.9 1035,190,.4 1050,180,.3 1075,185,.2 183,100,.4 200,103,.3 240,200,.8 275,83,.5 155,410,0 100,388,.4 112,400,.45 85,370,.3 95,255,.15 183,488,.25 60,437,.15 750,452,.4 1012,260,.3 905,200,.5 915,225,.6 535,560,.5 545,590,.5 575,600,.4 755,60,.6 540,95,.7 525,110,.8 538,135,1 520,130,.5 580,155,1 550,100,.6"]
];
for (const [ox, oy, s] of tiles)
  for (const t of s.split(" ")) {
    const [x, y, w] = t.split(",").map(Number);
    add(ox + x / 3, oy + y / 3, w < .25 ? w * .75 : w > 1.4 ? w * .85 : w);
  }

// Scattered minor fires, denser towards the eastern coalfield.
const land = [...document.querySelectorAll(".fill path")];
const inside = (x, y) => land.some(p => p.isPointInFill(new DOMPoint((x - p.dataset.x) * 3, (y - p.dataset.y) * 3)));
// cx, cy, rx, ry, count, min weight, max weight
const areas = [
  [700, 660, 320, 130, 380, .004, .024], [1000, 580, 260, 180, 360, .004, .022],
  [1130, 430, 170, 150, 80, .004, .018], [1090, 690, 110, 75, 200, .01, .07],
  [1350, 450, 85, 75, 190, .015, .08], [1390, 400, 40, 40, 50, .03, .13],
  [1260, 600, 60, 60, 120, .02, .13], [1220, 730, 90, 42, 190, .03, .17],
  [1180, 650, 90, 80, 80, .01, .06], [1330, 640, 95, 110, 500, .03, .22],
  [1410, 580, 85, 65, 330, .04, .26], [1350, 640, 55, 60, 140, .05, .26],
  [1460, 600, 65, 55, 170, .05, .3], [1280, 690, 60, 60, 150, .04, .24],
  [1440, 530, 45, 35, 80, .05, .28], [1340, 700, 75, 45, 120, .04, .22],
  [1370, 540, 60, 40, 80, .03, .18]
];
for (const [cx, cy, rx, ry, n, a, b] of areas)
  for (let i = 0; i < n; i++) {
    const th = rnd() * 6.2832, r = Math.sqrt(rnd());
    const x = cx + rx * r * Math.cos(th), y = cy + ry * r * Math.sin(th);
    const w = a + (b - a) * rnd() ** 1.6;
    if (inside(x, y)) add(x, y, w);
  }

const ramp = [[0, 253, 204, 138, 0], [.25, 253, 204, 138, .7], [.5, 252, 141, 89, .72], [.75, 227, 74, 51, .73], [1, 179, 0, 0, .71]];
const ctx = document.querySelector(".heat").getContext("2d");
const img = ctx.createImageData(W, H);
for (let i = 0; i < W * H; i++) {
  const v = Math.min(1, field[i]);
  if (v <= 0) continue;
  let k = 1;
  while (k < 4 && v > ramp[k][0]) k++;
  const a = ramp[k - 1], b = ramp[k], t = (v - a[0]) / (b[0] - a[0]);
  for (let c = 0; c < 3; c++) img.data[i * 4 + c] = a[c + 1] + (b[c + 1] - a[c + 1]) * t;
  img.data[i * 4 + 3] = 255 * (a[4] + (b[4] - a[4]) * t);
}
ctx.putImageData(img, 0, 0);
```
